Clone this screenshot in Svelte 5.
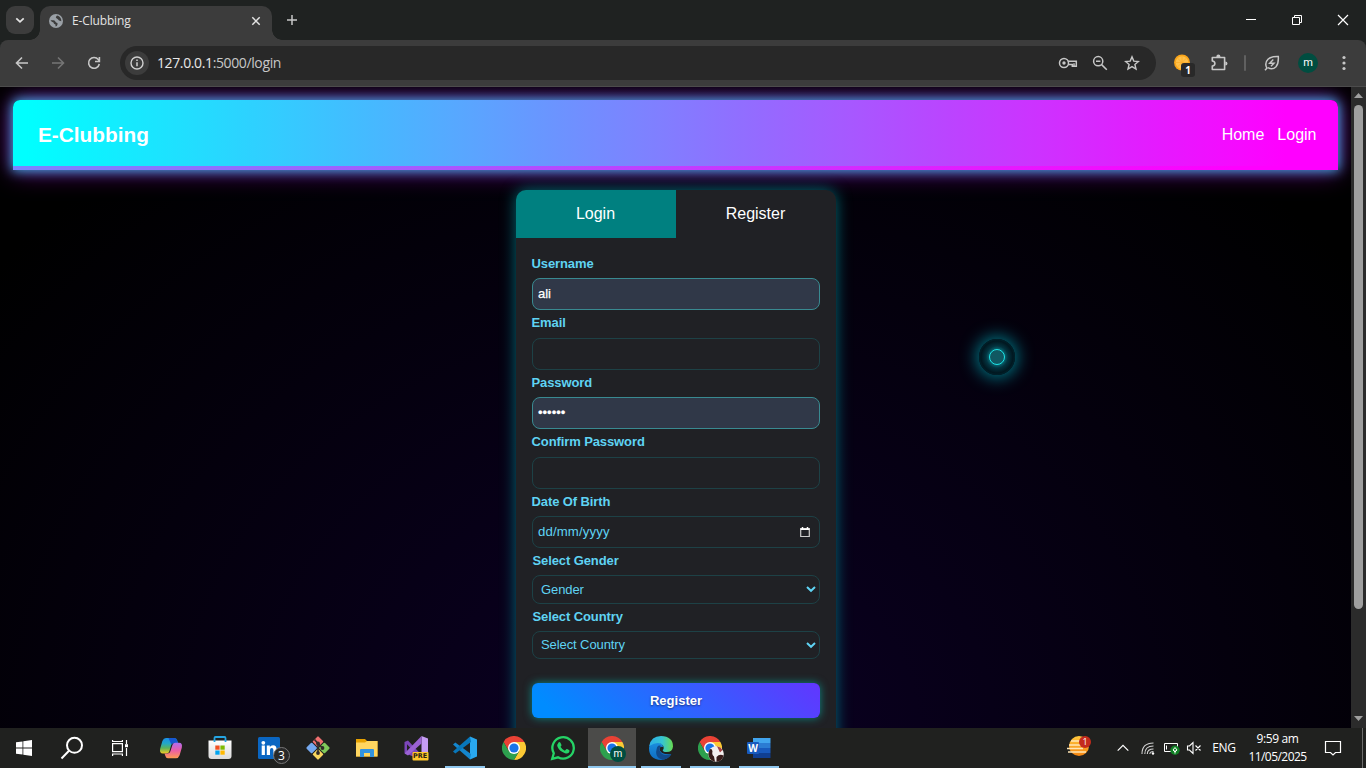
<script>
  const fields = [
    { label: 'Username', type: 'text', value: 'ali', filled: true },
    { label: 'Email', type: 'text', value: '' },
    { label: 'Password', type: 'text', value: '••••••', filled: true },
    { label: 'Confirm Password', type: 'text', value: '' },
    { label: 'Date Of Birth', type: 'date', value: 'dd/mm/yyyy' },
    { label: 'Select Gender', type: 'select', value: 'Gender' },
    { label: 'Select Country', type: 'select', value: 'Select Country' }
  ];
</script>

{#snippet chrome()}
  <path d="M12 6 H22.4 A12 12 0 0 1 12 24 L17.2 15 Z" fill="#fcc934" />
  <path d="M12 6 H22.4 A12 12 0 0 0 1.6 6 L6.8 15 Z" fill="#e94235" />
  <path d="M6.8 15 L1.6 6 A12 12 0 0 0 12 24 L17.2 15 Z" fill="#2da04e" />
  <circle cx="12" cy="12" r="6" fill="#fff" />
  <circle cx="12" cy="12" r="4.6" fill="#1a73e8" />
{/snippet}

<div class="screen">
  <div class="tabstrip">
    <button class="tab-search" aria-label="Search tabs">
      <svg width="12" height="12" viewBox="0 0 12 12"><path d="M2.300 4.300 6 7.800 9.700 4.300" fill="none" stroke="#e3e3e3" stroke-width="1.800" /></svg>
    </button>
    <div class="tab">
      <svg width="14" height="14" viewBox="0 0 14 14">
        <circle cx="7" cy="7" r="7" fill="#9aa0a6" />
        <path d="M1.500 6 C4 6.500 5.500 5.500 6.300 7.500 S9 8 8.500 10.500 Q8 12.500 6.500 12.500 V10.500 Q4.500 10 4.500 8.500 Q2.500 8 1.500 6ZM8 1.500 Q6 3.500 7.500 4.300 T10 6.500 L12.300 7.300 Q12.500 4 9.500 2Z" fill="#3c3c3c" />
      </svg>
      <span class="tab-title">E-Clubbing</span>
      <svg class="close" width="10" height="10" viewBox="0 0 10 10"><path d="M1.300 1.300 8.700 8.700M8.700 1.300 1.300 8.700" stroke="#e3e3e3" stroke-width="1.500" /></svg>
    </div>
    <svg class="plus" width="12" height="12" viewBox="0 0 12 12"><path d="M6 1V11M1 6H11" stroke="#c7c7c7" stroke-width="1.500" /></svg>
    <div class="window-buttons">
      <svg width="46" height="40" viewBox="0 0 46 40"><path d="M18 19.500H28" stroke="#fff" /></svg>
      <svg width="46" height="40" viewBox="0 0 46 40"><path d="M18.500 17.500h7v7h-7zM20.500 17.500v-2h7v7h-2" fill="none" stroke="#fff" /></svg>
      <svg width="46" height="40" viewBox="0 0 46 40"><path d="M18 15 28 25M28 15 18 25" stroke="#fff" stroke-width="1.200" /></svg>
    </div>
  </div>

  <div class="toolbar">
    <div class="cell"><svg width="16" height="16" viewBox="0 0 16 16"><path d="M14 8H2.500M8 2.500 2.500 8 8 13.500" fill="none" stroke="#c7c7c7" stroke-width="1.600" /></svg></div>
    <div class="cell"><svg width="16" height="16" viewBox="0 0 16 16"><path d="M2 8H13.500M8 2.500 13.500 8 8 13.500" fill="none" stroke="#757575" stroke-width="1.600" /></svg></div>
    <div class="cell"><svg width="16" height="16" viewBox="0 0 16 16"><path d="M13.300 9A5.400 5.400 0 1 1 12.300 4.600L13.300 6" fill="none" stroke="#c7c7c7" stroke-width="1.600" /><path d="M13.400 2V6.500H9" fill="none" stroke="#c7c7c7" stroke-width="1.600" /></svg></div>
    <div class="omnibox">
      <div class="site-info">
        <svg width="14" height="14" viewBox="0 0 14 14"><circle cx="7" cy="7" r="6" fill="none" stroke="#d0d0d0" stroke-width="1.400" /><path d="M7 6.200V10.200M7 3.500V5" stroke="#d0d0d0" stroke-width="1.500" /></svg>
      </div>
      <span class="url"><b>127.0.0.1</b>:5000/login</span>
      <div class="omni-icons">
        <svg width="20" height="16" viewBox="0 0 20 16" fill="none" stroke="#c7c7c7" stroke-width="1.500"><circle cx="6" cy="8" r="4.500" /><circle cx="6" cy="8" r="1.700" fill="#c7c7c7" stroke="none" /><path d="M9.700 6.200H18.300V11.200H14.300V9.600H10" /><path d="M16 8.200v3" /></svg>
        <svg width="16" height="16" viewBox="0 0 16 16" fill="none" stroke="#c7c7c7" stroke-width="1.500"><circle cx="6.200" cy="6.200" r="4.600" /><path d="M9.600 9.600 14.800 14.800M4 6.200h4.400" /></svg>
        <svg width="16" height="16" viewBox="0 0 16 16"><path d="M8 1.900 9.800 6.100 14.400 6.500 10.900 9.500 12 14 8 11.600 4 14 5.100 9.500 1.600 6.500 6.200 6.100Z" fill="none" stroke="#c7c7c7" stroke-width="1.400" /></svg>
      </div>
    </div>
    <div class="cell orange">
      <svg width="24" height="24" viewBox="0 0 24 24"><circle cx="11" cy="11.500" r="8" fill="#f9a51a" /><circle cx="11" cy="11.500" r="6.300" fill="#ffc04a" /><path d="M11 5V18M4.500 11.500H17.500M6.400 7l9.200 9M15.600 7l-9.200 9" stroke="#fbad2a" stroke-width=".8" /></svg>
      <span class="count">1</span>
    </div>
    <div class="cell"><svg width="18" height="18" viewBox="0 0 18 18"><path d="M2.300 3.500H14.600V15.500H2.300V12Q4.900 11.700 4.900 9.500T2.300 7Z" fill="none" stroke="#c7c7c7" stroke-width="1.600" stroke-linejoin="round" /><path d="M6.300 3Q6.300 .6 8.400 .6T10.500 3ZM15.300 7.400Q17.500 7.400 17.500 9.500T15.300 11.600Z" fill="#c7c7c7" /></svg></div>
    <div class="sep"></div>
    <div class="cell"><svg width="16" height="16" viewBox="0 0 16 16" fill="none" stroke="#c7c7c7" stroke-width="1.500"><path d="M2.800 13Q.3 8 4 4.300Q7 1.300 14.300 1.500Q14.800 8.500 12 11.700Q8.500 15.300 4 12.700" /><path d="M1 15.200 3.500 12.600" /><path d="M9.300 4.500 5.700 8.200H10L7 11.300" stroke-width="1.400" /></svg></div>
    <div class="cell"><span class="avatar">m</span></div>
    <div class="cell"><svg width="4" height="16" viewBox="0 0 4 16" fill="#c7c7c7"><circle cx="2" cy="2.500" r="1.600" /><circle cx="2" cy="8" r="1.600" /><circle cx="2" cy="13.500" r="1.600" /></svg></div>
  </div>

  <div class="viewport">
    <main class="page">
      <header>
        <div class="brand">E-Clubbing</div>
        <nav><span>Home</span><span>Login</span></nav>
      </header>

      <section class="card">
        <div class="tabs"><div class="on">Login</div><div>Register</div></div>
        <form>
          {#each fields as f}
            <div class="field" class:shift={f.type === 'select'}>
              <span class="label">{f.label}</span>
              <div class="control {f.type}" class:filled={f.filled}>
                <span>{f.value}</span>
                {#if f.type === 'date'}
                  <svg width="12" height="12" viewBox="0 0 12 12"><path d="M1.700 2.500h8.600v8H1.700z" fill="none" stroke="#ccc" stroke-width="1.200" /><path d="M1.500 3.200h9M3.500 1v2M8.500 1v2" stroke="#fff" stroke-width="1.500" /></svg>
                {:else if f.type === 'select'}
                  <svg width="10" height="8" viewBox="0 0 10 8"><path d="M1 2 5 5.800 9 2" fill="none" stroke="#5fd3f3" stroke-width="2" /></svg>
                {/if}
              </div>
            </div>
          {/each}
          <button class="submit" type="button">Register</button>
        </form>
      </section>
      <div class="cursor"><i></i></div>
    </main>
    <div class="scrollbar">
      <svg width="15" height="16" viewBox="0 0 15 16"><path d="M3 11 7.500 6 12 11Z" fill="#9f9f9f" /></svg>
      <div class="thumb"></div>
      <svg width="15" height="16" viewBox="0 0 15 16"><path d="M3 4 7.500 9 12 4Z" fill="#9f9f9f" /></svg>
    </div>
  </div>

  <footer class="taskbar">
    <div class="sys"><svg width="16" height="16" viewBox="0 0 16 16" fill="#fff"><path d="M0 2.300 6.500 1.400V7.600H0zM7.300 1.300 16 0V7.600H7.300zM0 8.400H6.500V14.600L0 13.700zM7.300 8.400H16V16L7.300 14.700z" /></svg></div>
    <div class="sys"><svg width="24" height="24" viewBox="0 0 24 24" fill="none" stroke="#fff" stroke-width="2"><circle cx="14.500" cy="9.300" r="7.500" /><path d="M9 14.800 1.500 22.500" /></svg></div>
    <div class="sys"><svg width="18" height="18" viewBox="0 0 18 18" fill="none" stroke="#fff" stroke-width="1.200"><path d="M1.600 4.600H11.400V12.600H1.600zM1.600 1v1.500H11.400V1M1.600 17v-2H11.400v2M15.500 1v4M15.500 9v8" /><rect x="14" y="5.200" width="3" height="3" fill="#fff" stroke="none" /></svg></div>
    <div class="apps">
      <div class="app">
        <svg width="24" height="24" viewBox="0 0 24 24">
          <defs>
            <linearGradient id="cpa" x1="0" y1="0" x2="0" y2="1"><stop offset="0" stop-color="#1a8fe8" /><stop offset=".35" stop-color="#22a8c8" /><stop offset=".65" stop-color="#5bb35c" /><stop offset="1" stop-color="#f3cb24" /></linearGradient>
            <linearGradient id="cpb" x1="0" y1="0" x2="0" y2="1"><stop offset="0" stop-color="#b06cf0" /><stop offset=".5" stop-color="#ec5fa4" /><stop offset="1" stop-color="#ff9c50" /></linearGradient>
          </defs>
          <path d="M7 2H15.500Q17.500 2 18.200 4.500L19 7H15Q12.800 7 12.200 9L10.300 15.500Q9.700 17.500 7.500 17.500H4Q.2 17.500 1.200 12.500L3.400 5Q4.500 2 7 2Z" fill="url(#cpa)" />
          <path d="M9.500 2H15.500Q17.500 2 18.200 4.500L19 7H15Q13 7 12.300 8.600Z" fill="#1657d0" />
          <path d="M17 22.300H8.800Q7 22.300 6.300 19.800L5.500 17.500H8.500Q10.700 17.500 11.300 15.500L13.500 8.800Q14.100 6.800 16.300 6.800H20Q23.800 6.800 22.800 11.800L20.600 19.300Q19.500 22.300 17 22.300Z" fill="url(#cpb)" />
        </svg>
      </div>
      <div class="app">
        <svg width="24" height="26" viewBox="0 0 24 26"><defs><linearGradient id="st" x1="0" y1="0" x2="0" y2="1"><stop offset="0" stop-color="#fff" /><stop offset="1" stop-color="#dadada" /></linearGradient></defs><path d="M.5 5.500H23.500V21Q23.500 24 20.500 24H3.500Q.5 24 .5 21Z" fill="url(#st)" /><path d="M6.500 7V3Q6.500 2 7.500 2H16.500Q17.500 2 17.500 3V7" fill="none" stroke="#25a5e2" stroke-width="1.800" /><path d="M7.300 10.500h4.300v4.200H7.300z" fill="#f25022" /><path d="M12.400 10.500h4.300v4.200h-4.300z" fill="#7fba00" /><path d="M7.300 15.500h4.300v4.200H7.300z" fill="#00a4ef" /><path d="M12.400 15.500h4.300v4.200h-4.300z" fill="#ffb900" /></svg>
      </div>
      <div class="app">
        <svg class="linkedin" width="34" height="32" viewBox="0 0 34 32"><rect x="7" y="5" width="22" height="22" rx="1.500" fill="#0a66c2" /><g fill="#fff"><circle cx="12.300" cy="10.800" r="1.900" /><path d="M10.700 13.500h3.200V23h-3.200zM15.800 13.500h3v1.400q1-1.700 3.200-1.700 3.600 0 3.600 4.300V23h-3.200v-5q0-2.100-1.600-2.100-1.800 0-1.800 2.100v5h-3.200z" /></g></svg>
        <span class="badge">3</span>
      </div>
      <div class="app">
        <svg width="26" height="26" viewBox="0 0 26 26"><g transform="rotate(45 13 13)"><rect x="4.500" y="4.500" width="8" height="8" rx="1" fill="#f07070" /><rect x="13.500" y="4.500" width="8" height="8" rx="1" fill="#80c95a" /><rect x="4.500" y="13.500" width="8" height="8" rx="1" fill="#75a9ef" /><rect x="13.500" y="13.500" width="8" height="8" rx="1" fill="#f8d65e" /></g><path d="M9.500 4.500 13 8.500V18M13 8.500 17.500 13" stroke="#302b28" stroke-width="1.600" fill="none" /><g fill="#302b28"><circle cx="13" cy="8.500" r="1.900" /><circle cx="13" cy="18" r="1.900" /><circle cx="17.500" cy="13" r="1.900" /></g></svg>
      </div>
      <div class="app">
        <svg width="24" height="24" viewBox="0 0 24 24"><path d="M1 3H10L12 5H22.500V20.500H1Z" fill="#e6a100" /><path d="M1 6.500H10L12 5H22.500V20.500H1Z" fill="#ffd660" /><path d="M5 21V14Q5 13 6 13H18Q19 13 19 14V21H15V17H9V21Z" fill="#3293df" /></svg>
      </div>
      <div class="app">
        <svg width="26" height="26" viewBox="0 0 26 26"><path d="M1.500 7 5 5.500 19 20.500V25L1.500 18Z" fill="#7c46ba" /><path d="M4 9.200V16.500L7.500 13Z" fill="#222" /><path d="M18.500 1 25 3.500V22.500L18.500 25Z" fill="#c59cf3" /><path d="M18.500 1V8.500L5 20.500 1.500 18.500Z" fill="#9a62d3" /><rect x="9.500" y="17" width="16" height="8.500" rx="1" fill="#ffc72c" /></svg>
        <span class="pre">PRE</span>
      </div>
      <div class="app run">
        <svg width="26" height="26" viewBox="0 0 26 26"><path d="M18 1.500 25 4.500V21.500L18 24.500Z" fill="#29a8ee" /><path d="M18 24.500 1 9.500 3.300 7.500 19 19Z" fill="#1486cd" /><path d="M18 1.500 1 16.500 3.300 18.500 19 7Z" fill="#0877ba" /></svg>
      </div>
      <div class="app"><svg width="24" height="24" viewBox="0 0 24 24">{@render chrome()}</svg></div>
      <div class="app">
        <svg width="26" height="26" viewBox="0 0 26 26"><path d="M2.200 23.800 3.800 18.200A10.700 10.700 0 1 1 8 22.300Z" fill="#1f211f" stroke="#25d366" stroke-width="2.300" /><path d="M8.500 7.500Q9.500 6.500 10.300 7.500L11.500 10Q11.500 11 10.500 11.800Q12 14.500 14.800 15.700L16.300 14.200Q17 13.800 19.300 15.300Q20 15.800 19 17.500Q17.500 19 15 18.200Q9.500 16.500 7.500 11.800Q6.800 9.500 8.500 7.500Z" fill="#25d366" /></svg>
      </div>
      <div class="app run active">
        <svg width="24" height="24" viewBox="0 0 24 24">{@render chrome()}</svg>
        <span class="profile">m</span>
      </div>
      <div class="app run">
        <svg width="26" height="26" viewBox="0 0 26 26">
          <defs><linearGradient id="ea" x1="0" y1="0" x2="1" y2="0"><stop offset="0" stop-color="#2caee8" /><stop offset=".55" stop-color="#35c4d2" /><stop offset="1" stop-color="#68dc50" /></linearGradient><linearGradient id="eb" x1="0" y1="0" x2="0" y2="1"><stop offset="0" stop-color="#1b8fe0" /><stop offset="1" stop-color="#0f6cc0" /></linearGradient></defs>
          <path d="M1 13Q1 7 8 7Q15 7.500 15 12Q12 11 11.500 14Q12 20 23.300 19.300Q19.500 25 13 25Q1 24.500 1 13Z" fill="url(#eb)" />
          <path d="M1.200 11Q3 1 13 1Q25 1.500 25 11.500Q24.500 17 18.500 17Q14.500 17 14.800 15Q16.500 13.500 15 10.500Q11 5.500 1.200 11Z" fill="url(#ea)" />
          <path d="M9.200 12Q5.500 22.500 15 24.800Q20.500 24 23.300 19.300Q13.500 22 11.500 15Q11.300 12.500 13 10.800Q10.500 10 9.200 12Z" fill="#114a8b" />
        </svg>
      </div>
      <div class="app run">
        <svg width="24" height="24" viewBox="0 0 24 24">{@render chrome()}</svg>
        <svg class="photo" width="16" height="16" viewBox="0 0 16 16"><circle cx="8" cy="8" r="7.800" fill="#f3efef" /><path d="M1.500 3.500Q4 2 4.500 5.500Q3.500 8.500 6 10.500L7 15.700Q1 14.500 .3 8ZM8.500 11Q11.500 7.500 15.500 9.500Q14.500 14 10.500 15.500L8.500 15.800Z" fill="#361b19" /><path d="M9 .3Q13 1 14.500 4L12 6.500Z" fill="#a44344" /></svg>
      </div>
      <div class="app run">
        <svg width="26" height="24" viewBox="0 0 26 24"><path d="M7 2H24.500V7H7z" fill="#41a5ee" /><path d="M7 7H24.500V12H7z" fill="#2b7cd3" /><path d="M7 12H24.500V17H7z" fill="#185abd" /><path d="M7 17H24.500V22H7z" fill="#103f91" /><rect x="1" y="6" width="12" height="12" rx="1" fill="#185abd" /></svg>
        <span class="w">W</span>
      </div>
    </div>

    <div class="tray">
      <div class="news">
        <svg width="26" height="24" viewBox="0 0 26 24"><defs><linearGradient id="sun" x1="0" y1="0" x2="0" y2="1"><stop offset="0" stop-color="#ffc83d" /><stop offset="1" stop-color="#f58410" /></linearGradient></defs><circle cx="13" cy="12" r="10" fill="url(#sun)" /><path d="M5 7H14M3 11H19M1 14.500H17M2 18H20" stroke="#ffe6b5" stroke-width="1.300" /></svg>
        <span>1</span>
      </div>
      <div class="chev"><svg width="12" height="8" viewBox="0 0 12 8"><path d="M.7 6.700 6 1.300 11.300 6.700" fill="none" stroke="#fff" stroke-width="1.200" /></svg></div>
      <div class="wifi"><svg width="14" height="14" viewBox="0 0 14 14" fill="none" stroke="#d2d2d2" stroke-width="1.100"><path d="M1 13Q1 2 12.500 2M3.800 13Q3.800 5 12.500 5M6.300 13Q6.300 8 12.500 8M8.800 13Q9 10.500 12.500 10.500" /><circle cx="12" cy="12.500" r="1.200" fill="#fff" stroke="none" /></svg></div>
      <div class="batt"><svg width="17" height="14" viewBox="0 0 17 14"><path d="M1.500 10.500V2.500H14.500V10.500Z" fill="none" stroke="#fff" /><path d="M3.500 4.500V8.500" stroke="#fff" /><circle cx="12" cy="9.200" r="4.700" fill="#128126" /><path d="M12 12.500V9M10 9 12 6.500 14 9 12 11Z" stroke="#fff" fill="none" /></svg></div>
      <div class="vol"><svg width="16" height="14" viewBox="0 0 16 14" fill="none" stroke="#fff" stroke-width="1.100"><path d="M1.500 5H3.500L7 1.500V12.500L3.500 9H1.500ZM9.500 4.500 14.500 9.500M14.500 4.500 9.500 9.500" /></svg></div>
      <div class="lang">ENG</div>
      <div class="clock"><span>9:59 am</span><span class="date">11/05/2025</span></div>
      <div class="notif"><svg width="18" height="18" viewBox="0 0 18 18"><path d="M1.500 2.500H16.500V13.500H11.500L9 16 6.500 13.500H1.500Z" fill="none" stroke="#fff" stroke-width="1.200" /></svg></div>
      <div class="peek"></div>
    </div>
  </footer>
</div>

<style>
  :global(body) { margin: 0; overflow: hidden; background: #000; }
  .screen { width: 1366px; height: 768px; display: flex; flex-direction: column; overflow: hidden; background: #1f2221; font-family: 'Open Sans', 'Noto Sans', sans-serif; color: #fff; }
  .screen * { box-sizing: border-box; }
  svg { display: block; flex: none; }
  button { border: 0; padding: 0; }

  .tabstrip { height: 40px; flex: none; display: flex; align-items: center; padding-left: 6px; }
  .tab-search { width: 28px; height: 28px; border-radius: 9px; background: #3c3c3c; display: grid; place-items: center; }
  .tab { position: relative; align-self: flex-end; width: 232px; height: 34px; margin-left: 6px; background: #3c3c3c; border-radius: 10px 10px 0 0; display: flex; align-items: center; padding: 0 11px 5px 9px; }
  .tab::before, .tab::after { content: ''; position: absolute; bottom: 0; width: 10px; height: 10px; }
  .tab::before { left: -10px; background: radial-gradient(circle at 0 0, transparent 9.500px, #3c3c3c 10px); }
  .tab::after { right: -10px; background: radial-gradient(circle at 100% 0, transparent 9.500px, #3c3c3c 10px); }
  .tab-title { margin-left: 9px; font-size: 12px; letter-spacing: -0.15px; color: #e3e3e3; }
  .close { margin-left: auto; }
  .plus { margin-left: 14px; }
  .window-buttons { margin-left: auto; display: flex; }

  .toolbar { height: 47px; flex: none; display: flex; align-items: center; padding: 0 4px 1px; background: #3c3c3c; box-shadow: inset 0 -1px #4c4c4c; border-radius: 8px 8px 0 0; }
  .cell { width: 36px; height: 36px; display: grid; place-items: center; position: relative; flex: none; }
  .omnibox { width: 1036px; height: 34px; margin: 0 9px 0 8px; border-radius: 17px; background: #282828; display: flex; align-items: center; padding: 0 16px 0 5px; }
  .site-info { width: 24px; height: 24px; border-radius: 50%; background: #3c3c3c; display: grid; place-items: center; }
  .url { margin: 0 0 2px 8px; font-size: 14px; letter-spacing: -0.38px; color: #c7c7c7; }
  .url b { font-weight: 400; color: #e8e8e8; }
  .omni-icons { margin-left: auto; display: flex; gap: 16px; }
  .omni-icons svg:first-child { margin-right: -2px; }
  .count { position: absolute; left: 16px; top: 18px; width: 14px; height: 14px; border-radius: 3px; background: #292929; font: bold 10px/15px 'Open Sans', sans-serif; text-align: center; }
  .sep { width: 2px; height: 16px; margin: 0 8px 0 7px; background: #606060; border-radius: 1px; }
  .avatar { width: 20px; height: 20px; border-radius: 50%; background: #004d40; font: 11px/19px Roboto, sans-serif; text-align: center; }

  .viewport { height: 641px; flex: none; display: flex; }
  .page { position: relative; width: 1351px; height: 641px; padding: 13px 13px 0; overflow: hidden; background: radial-gradient(ellipse 880px 740px at 675px 650px, #0b0024, #000); font-family: 'Liberation Sans', Arial, sans-serif; }
  header { height: 70px; display: flex; justify-content: space-between; align-items: center; padding: 0 21.500px 0 25px; border-radius: 7px 7px 0 0; background: linear-gradient(90deg, #7a85ff, #f0f 92%) 0 100% / 100% 4px no-repeat, linear-gradient(90deg, #0ff 1%, #f0f 96%); box-shadow: 0 0 12px 1px #3fb3e6, 0 0 26px rgba(210, 0, 255, 0.6); }
  .brand { font-size: 20.800px; font-weight: 700; line-height: 24px; }
  nav { display: flex; gap: 13px; font-size: 16px; line-height: 18px; }
  .card { width: 320px; height: 570px; margin: 20px 0 0 503px; border-radius: 10px; background: #202125; box-shadow: 0 0 15px rgba(0, 140, 150, 0.75); }
  .tabs { display: flex; height: 48px; font-size: 16px; line-height: 47px; text-align: center; border-radius: 10px 10px 0 0; overflow: hidden; }
  .tabs div { flex: 1; padding-right: 1px; }
  .tabs .on { background: #008080; }
  form { padding: 13px 16px 0; font-size: 13px; color: #5fd3f3; }
  .label { display: block; height: 27.200px; line-height: 26.800px; font-weight: 700; letter-spacing: -0.1px; margin-left: -0.5px; }
  .shift .label { margin-left: 0.5px; }
  .control { height: 32.250px; border: 1px solid #1d4146; border-radius: 8px; padding: 0 8px 1px 5px; display: flex; align-items: center; justify-content: space-between; }
  .control.filled { background: #303848; border-color: #398a91; color: #fff; -webkit-text-stroke: 0.25px #fff; }
  .control.date span { letter-spacing: 0.13px; word-spacing: 0; font-size: 13.200px; }
  .control.select { height: 28.300px; padding: 0 3px 1px 8px; letter-spacing: -0.09px; }
  .submit { display: block; width: 288px; height: 35px; margin-top: 23.800px; border-radius: 6px; color: #fff; font: 700 13px 'Liberation Sans', Arial, sans-serif; background: linear-gradient(45deg, #008cff 8%, #6236ff); box-shadow: 0 0 8px rgba(0, 190, 180, 0.65); text-shadow: 0 1px 2px rgba(0, 0, 0, 0.5); }
  .cursor { position: absolute; left: 979px; top: 252px; width: 36px; height: 36px; border-radius: 50%; display: grid; place-items: center; background: radial-gradient(circle, #08606b 8px, #03333f 11px, #011720 16px, #00232c 18px); box-shadow: 0 0 16px 3px #007280; }
  .cursor i { width: 16px; height: 16px; border-radius: 50%; border: 1px solid #1de5e8; background: #105862; }
  .scrollbar { width: 15px; background: #2b2b2b; display: flex; flex-direction: column; }
  .scrollbar svg:last-child { margin-top: auto; }
  .thumb { width: 9px; height: 504px; margin: 2px 0 0 3px; border-radius: 5px; background: #9f9f9f; }

  .taskbar { height: 40px; flex: none; display: flex; background: #20211f; }
  .sys { width: 48px; display: grid; place-items: center; }
  .apps { display: flex; margin-left: 3px; gap: 1px; }
  .app { position: relative; width: 48px; height: 40px; display: grid; place-items: center; }
  .run::after { content: ''; position: absolute; left: 4px; right: 4px; bottom: 0; height: 2px; background: #8fc7ee; }
  .active { background: #4b4b49; }
  .active::after { left: 0; right: 0; }
  .linkedin { margin-right: 2px; }
  .badge { position: absolute; left: 28px; top: 19px; width: 17px; height: 17px; border: 1px solid #777; border-radius: 50%; background: #292929; font-size: 12px; line-height: 15px; text-align: center; }
  .pre { position: absolute; left: 20px; top: 24px; width: 16px; text-align: center; font: bold 6.500px/8px 'DejaVu Sans', sans-serif; color: #282013; }
  .profile { position: absolute; left: 22px; top: 18px; width: 16px; height: 16px; border-radius: 50%; background: #004d40; font: 10px/15px Roboto, sans-serif; text-align: center; }
  .photo { position: absolute; left: 22px; top: 18px; }
  .w { position: absolute; left: 12px; top: 14px; width: 12px; font: bold 10px/12px 'Open Sans', sans-serif; text-align: center; }
  .tray { margin-left: auto; display: flex; align-items: center; font-size: 12px; letter-spacing: -0.35px; }
  .tray > div { display: grid; place-items: center; }
  .news { width: 48px; position: relative; margin-right: 9px; top: -2px; }
  .news span { position: absolute; left: 24px; top: 2px; width: 12px; height: 12px; border-radius: 50%; background: #c42b1c; font-size: 9px; line-height: 12px; text-align: center; letter-spacing: 0; }
  .chev { width: 22px; margin-right: 3px; }
  .wifi { width: 22px; }
  .batt { width: 24px; }
  .vol { width: 22px; }
  .lang { width: 38px; margin-top: -1px; }
  .clock { width: 69px; line-height: 18px; }
  .date { letter-spacing: -0.55px; }
  .notif { width: 42px; }
  .peek { width: 12px; height: 40px; background: linear-gradient(#6c6c6b, #6c6c6b) 8px 0 / 1px 40px no-repeat; }
</style>
